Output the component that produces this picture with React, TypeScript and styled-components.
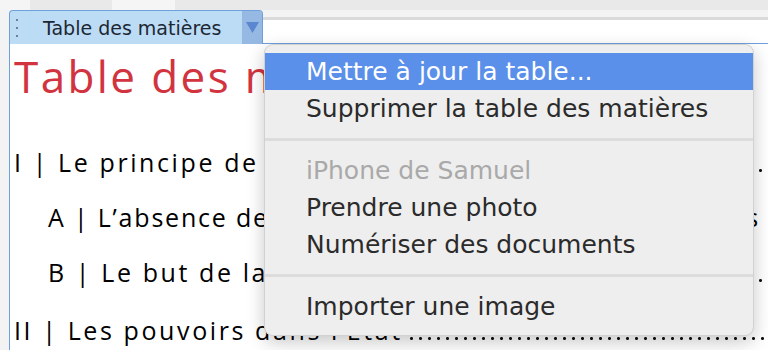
import styled, { createGlobalStyle } from "styled-components";

const GlobalStyle = createGlobalStyle`
  html, body {
    margin: 0;
    padding: 0;
    background: #f3f3f3;
    overflow: hidden;
  }
`;

const blue = "#6f9fdc";
const menuFont = `"DejaVu Sans", "Liberation Sans", sans-serif`;
const docFont = `"Open Sans", Lato, sans-serif`;

const menuItems = [
  { group: 1, label: "Mettre à jour la table...", active: true },
  { group: 1, label: "Supprimer la table des matières" },
  { group: 2, label: "iPhone de Samuel", disabled: true },
  { group: 2, label: "Prendre une photo" },
  { group: 2, label: "Numériser des documents" },
  { group: 3, label: "Importer une image" },
];

const App = () => {
  return (
    <Page>
      <GlobalStyle />
      <TopStrip>
        <StripBlock width={30} />
        <StripBlock width={82} shade />
        <StripBlock width={63} />
        <StripBlock width={593} shade />
      </TopStrip>
      <HeaderRow>
        <Tab>
          <Grip>
            <Dot />
            <Dot />
            <Dot />
          </Grip>
          <TabLabel>Table des matières</TabLabel>
          <ArrowButton>
            <svg width="13" height="11" viewBox="0 0 13 11">
              <path d="M0 0 H13 L6.5 11 Z" fill="#5b86d0" />
            </svg>
          </ArrowButton>
        </Tab>
        <Field />
      </HeaderRow>
      <DocBox>
        <Heading>Table des matières</Heading>
        <Entry>
          <EntryLabel>I | Le principe de séparation</EntryLabel>
          <Leader />
        </Entry>
        <Entry indent tight>
          <EntryLabel>A | L’absence de séparation</EntryLabel>
          <EntryTail>s</EntryTail>
        </Entry>
        <Entry indent>
          <EntryLabel>B | Le but de la séparation</EntryLabel>
          <Leader />
        </Entry>
        <Entry last>
          <EntryLabel>II | Les pouvoirs dans l’État</EntryLabel>
          <Leader />
        </Entry>
      </DocBox>
      <Menu>
        {menuItems.map((item, i) => (
          <div key={item.label}>
            {i > 0 && menuItems[i - 1].group !== item.group && <Separator />}
            <MenuItem active={item.active} disabled={item.disabled}>
              {item.label}
            </MenuItem>
          </div>
        ))}
      </Menu>
    </Page>
  );
};

export default App;

const Page = styled.div`
  position: relative;
  width: 768px;
  height: 350px;
  overflow: hidden;
  background: #f3f3f3;
`;

const TopStrip = styled.div`
  display: flex;
  height: 10px;
`;

const StripBlock = styled.div<{ width: number; shade?: boolean }>`
  width: ${(p) => p.width}px;
  background: ${(p) => (p.shade ? "#e9e9e9" : "#f5f5f5")};
`;

const HeaderRow = styled.div`
  display: flex;
  align-items: stretch;
  padding-left: 9px;
  height: 34px;
`;

const Tab = styled.div`
  display: flex;
  align-items: stretch;
  width: 254px;
  box-sizing: border-box;
  background: #bcdcf6;
  border: 1px solid ${blue};
  border-bottom: none;
  border-radius: 4px 4px 0 0;
  overflow: hidden;
`;

const Grip = styled.div`
  display: flex;
  flex-direction: column;
  justify-content: center;
  gap: 6px;
  padding: 0 5px 0 6px;
`;

const Dot = styled.span`
  width: 2px;
  height: 2px;
  background: #6b7f99;
`;

const TabLabel = styled.div`
  flex: 1;
  display: flex;
  align-items: center;
  padding-left: 20px;
  font-family: ${menuFont};
  font-size: 19px;
  color: #1c2733;
`;

const ArrowButton = styled.div`
  width: 20px;
  display: flex;
  align-items: center;
  justify-content: center;
  background: #95b9e2;
`;

const Field = styled.div`
  flex: 1;
  margin-top: 7px;
  background: #ffffff;
  border-top: 3px solid #dadada;
  border-bottom: 1px solid ${blue};
`;

const DocBox = styled.div`
  margin-left: 9px;
  height: 306px;
  background: #ffffff;
  border-left: 1px solid ${blue};
  padding-left: 4px;
  font-family: ${docFont};
  color: #000000;
`;

const Heading = styled.h1`
  margin: 0;
  padding-top: 4px;
  height: 94px;
  box-sizing: border-box;
  font-family: ${docFont};
  font-size: 44px;
  font-weight: 400;
  letter-spacing: 2.4px;
  line-height: 56px;
  color: #d1343f;
  white-space: nowrap;
`;

const Entry = styled.div<{ indent?: boolean; last?: boolean; tight?: boolean }>`
  display: flex;
  align-items: baseline;
  height: 55px;
  padding-left: ${(p) => (p.indent ? 34 : 0)}px;
  padding-top: ${(p) => (p.last ? 3 : 0)}px;
  font-size: 25px;
  letter-spacing: ${(p) => (p.tight ? 1.8 : 2.6)}px;
  line-height: 48px;
  white-space: nowrap;
`;

const EntryLabel = styled.span`
  flex-shrink: 0;
`;

const EntryTail = styled.span`
  margin-left: auto;
  padding-right: 8px;
`;

const Leader = styled.span`
  flex: 1;
  height: 3px;
  margin-left: 4px;
  background-image: radial-gradient(circle, #111 1.3px, transparent 1.6px);
  background-size: 9px 3px;
  background-repeat: repeat-x;
`;

const Menu = styled.div`
  position: absolute;
  left: 264px;
  top: 44px;
  width: 490px;
  height: 292px;
  box-sizing: border-box;
  padding: 8px 0 12px;
  background: #eeeeee;
  border: 1px solid rgba(0, 0, 0, 0.12);
  border-radius: 9px;
  box-shadow: 0 6px 18px rgba(0, 0, 0, 0.22);
  font-family: ${menuFont};
`;

const Separator = styled.div`
  height: 25px;
  display: flex;
  align-items: center;
  &::after {
    content: "";
    flex: 1;
    height: 3px;
    background: #dcdcdc;
  }
`;

const MenuItem = styled.div<{ active?: boolean; disabled?: boolean }>`
  height: 37px;
  display: flex;
  align-items: center;
  padding-left: 41px;
  font-size: 25px;
  background: ${(p) => (p.active ? "#5a8fea" : "transparent")};
  color: ${(p) => (p.active ? "#ffffff" : p.disabled ? "#a9a9a9" : "#2b2b2b")};
`;
